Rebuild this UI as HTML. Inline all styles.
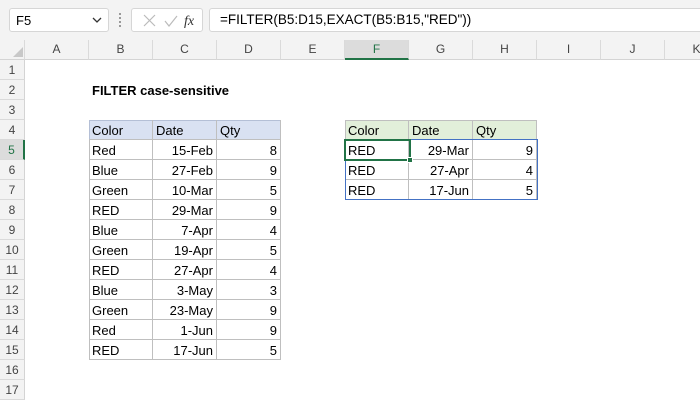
<!DOCTYPE html>
<html><head><style>
*{margin:0;padding:0;box-sizing:border-box}
body{width:700px;height:400px;overflow:hidden;background:#fff;font-family:"Liberation Sans",Arial,sans-serif;font-size:13px;color:#000;position:relative}
.a{position:absolute}
.top{left:0;top:0;width:700px;height:40px;background:#f3f3f3}
.box{background:#fff;border:1px solid #d6d6d6;border-radius:3px}
.colh{top:40px;height:20px;background:#f3f3f3;border-bottom:1px solid #d4d4d4;border-right:1px solid #dadada;text-align:center;line-height:19px;color:#444;font-size:12px}
.rowh{left:0;width:25px;height:20px;background:#f3f3f3;border-bottom:1px solid #dadada;border-right:1px solid #d4d4d4;text-align:center;line-height:20px;color:#444;font-size:12px}
.c{height:20px;width:64px;line-height:21px;padding:0 3px;white-space:nowrap;overflow:hidden}
.r{text-align:right}
.t1{border-right:1px solid #bfbfbf;border-bottom:1px solid #bfbfbf}
</style></head><body>
<div class="a top"></div>
<div class="a box" style="left:9px;top:8px;width:100px;height:24px"></div>
<div class="a" style="left:16px;top:13px;font-size:13px">F5</div>
<svg class="a" style="left:92px;top:16px" width="10" height="8"><path d="M1 2 L5 6 L9 2" stroke="#333" stroke-width="1.3" fill="none"/></svg>
<div class="a" style="left:119px;top:13px;width:2px;height:14px;border-left:2px dotted #999"></div>
<div class="a box" style="left:131px;top:8px;width:72px;height:24px"></div>
<svg class="a" style="left:138px;top:13px" width="60" height="16"><path d="M6 2 L17 13 M17 2 L6 13" stroke="#bbb" stroke-width="1.2"/><path d="M27 8 L31 13 L39 3" stroke="#bbb" stroke-width="1.2" fill="none"/><text x="46" y="12" font-family="Liberation Serif" font-style="italic" font-size="14" fill="#333">fx</text></svg>
<div class="a box" style="left:209px;top:8px;width:500px;height:24px"></div>
<div class="a" style="left:220px;top:12px;font-size:13.5px">=FILTER(B5:D15,EXACT(B5:B15,"RED"))</div>

<div class="a colh" style="left:0;width:25px;background:#f3f3f3"></div>
<svg class="a" style="left:12px;top:46px" width="12" height="12"><path d="M11 1 L11 11 L1 11 Z" fill="#c8c8c8"/></svg>
<div class="a colh" style="left:25px;width:64px">A</div>
<div class="a colh" style="left:89px;width:64px">B</div>
<div class="a colh" style="left:153px;width:64px">C</div>
<div class="a colh" style="left:217px;width:64px">D</div>
<div class="a colh" style="left:281px;width:64px">E</div>
<div class="a colh" style="left:345px;width:64px;background:#dcdcdc;border-bottom:2px solid #217346;color:#217346">F</div>
<div class="a colh" style="left:409px;width:64px">G</div>
<div class="a colh" style="left:473px;width:64px">H</div>
<div class="a colh" style="left:537px;width:64px">I</div>
<div class="a colh" style="left:601px;width:64px">J</div>
<div class="a colh" style="left:665px;width:64px">K</div>

<div class="a rowh" style="top:60px">1</div>
<div class="a rowh" style="top:80px">2</div>
<div class="a rowh" style="top:100px">3</div>
<div class="a rowh" style="top:120px">4</div>
<div class="a rowh" style="top:140px;background:#dcdcdc;border-right:2px solid #217346;color:#217346">5</div>
<div class="a rowh" style="top:160px">6</div>
<div class="a rowh" style="top:180px">7</div>
<div class="a rowh" style="top:200px">8</div>
<div class="a rowh" style="top:220px">9</div>
<div class="a rowh" style="top:240px">10</div>
<div class="a rowh" style="top:260px">11</div>
<div class="a rowh" style="top:280px">12</div>
<div class="a rowh" style="top:300px">13</div>
<div class="a rowh" style="top:320px">14</div>
<div class="a rowh" style="top:340px">15</div>
<div class="a rowh" style="top:360px">16</div>
<div class="a rowh" style="top:380px">17</div>

<div class="a" style="left:92px;top:83px;font-weight:bold">FILTER case-sensitive</div>

<!-- table 1 -->
<div class="a" style="left:89px;top:120px;width:192px;height:240px;border-left:1px solid #bfbfbf;border-top:1px solid #bfbfbf"></div>
<div class="a" style="left:89px;top:120px;width:192px;height:20px;background:#d9e1f2;border:1px solid #b4bfd6"></div>
<div class="a c t1" style="left:89px;top:120px">Color</div><div class="a c t1" style="left:153px;top:120px">Date</div><div class="a c t1" style="left:217px;top:120px">Qty</div>
<div class="a c t1" style="left:89px;top:140px">Red</div><div class="a c t1 r" style="left:153px;top:140px">15-Feb</div><div class="a c t1 r" style="left:217px;top:140px">8</div>
<div class="a c t1" style="left:89px;top:160px">Blue</div><div class="a c t1 r" style="left:153px;top:160px">27-Feb</div><div class="a c t1 r" style="left:217px;top:160px">9</div>
<div class="a c t1" style="left:89px;top:180px">Green</div><div class="a c t1 r" style="left:153px;top:180px">10-Mar</div><div class="a c t1 r" style="left:217px;top:180px">5</div>
<div class="a c t1" style="left:89px;top:200px">RED</div><div class="a c t1 r" style="left:153px;top:200px">29-Mar</div><div class="a c t1 r" style="left:217px;top:200px">9</div>
<div class="a c t1" style="left:89px;top:220px">Blue</div><div class="a c t1 r" style="left:153px;top:220px">7-Apr</div><div class="a c t1 r" style="left:217px;top:220px">4</div>
<div class="a c t1" style="left:89px;top:240px">Green</div><div class="a c t1 r" style="left:153px;top:240px">19-Apr</div><div class="a c t1 r" style="left:217px;top:240px">5</div>
<div class="a c t1" style="left:89px;top:260px">RED</div><div class="a c t1 r" style="left:153px;top:260px">27-Apr</div><div class="a c t1 r" style="left:217px;top:260px">4</div>
<div class="a c t1" style="left:89px;top:280px">Blue</div><div class="a c t1 r" style="left:153px;top:280px">3-May</div><div class="a c t1 r" style="left:217px;top:280px">3</div>
<div class="a c t1" style="left:89px;top:300px">Green</div><div class="a c t1 r" style="left:153px;top:300px">23-May</div><div class="a c t1 r" style="left:217px;top:300px">9</div>
<div class="a c t1" style="left:89px;top:320px">Red</div><div class="a c t1 r" style="left:153px;top:320px">1-Jun</div><div class="a c t1 r" style="left:217px;top:320px">9</div>
<div class="a c t1" style="left:89px;top:340px">RED</div><div class="a c t1 r" style="left:153px;top:340px">17-Jun</div><div class="a c t1 r" style="left:217px;top:340px">5</div>

<!-- table 2 -->
<div class="a" style="left:345px;top:120px;width:192px;height:20px;background:#e2efda;border:1px solid #bfbfbf"></div>
<div class="a c t1" style="left:345px;top:120px">Color</div><div class="a c t1" style="left:409px;top:120px">Date</div><div class="a c t1" style="left:473px;top:120px">Qty</div>
<div class="a c t1" style="left:345px;top:140px">RED</div><div class="a c t1 r" style="left:409px;top:140px">29-Mar</div><div class="a c t1 r" style="left:473px;top:140px">9</div>
<div class="a c t1" style="left:345px;top:160px">RED</div><div class="a c t1 r" style="left:409px;top:160px">27-Apr</div><div class="a c t1 r" style="left:473px;top:160px">4</div>
<div class="a c t1" style="left:345px;top:180px">RED</div><div class="a c t1 r" style="left:409px;top:180px">17-Jun</div><div class="a c t1 r" style="left:473px;top:180px">5</div>
<div class="a" style="left:345px;top:139px;width:193px;height:61px;border:1px solid #4472c4"></div>
<div class="a" style="left:344px;top:139px;width:67px;height:22px;border:2px solid #217346"></div>
<div class="a" style="left:407px;top:157px;width:6px;height:6px;background:#217346;border:1px solid #fff"></div>
</body></html>
